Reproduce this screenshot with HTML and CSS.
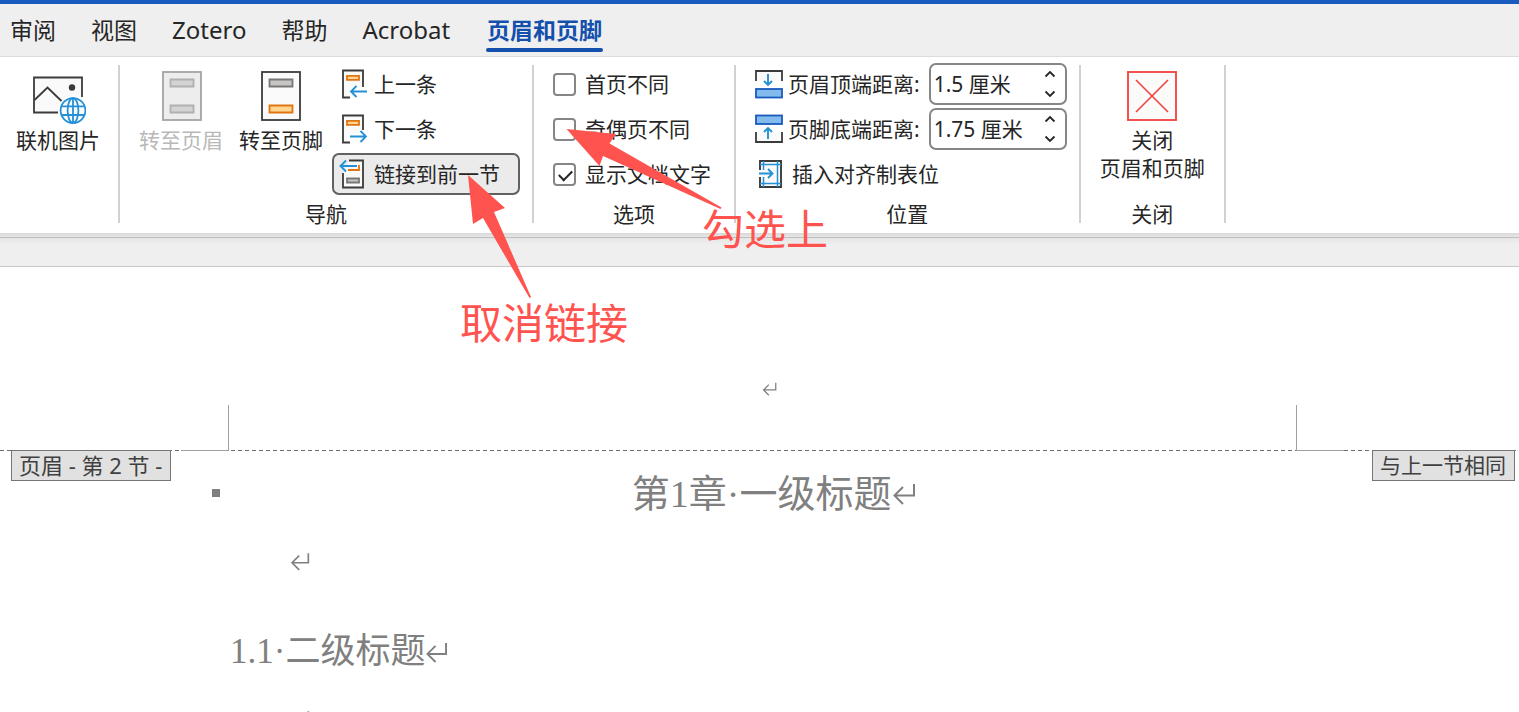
FILE: index.html
```html
<!DOCTYPE html>
<html lang="zh-CN">
<head>
<meta charset="utf-8">
<title>页眉和页脚</title>
<link rel="stylesheet" href="styles.css">
</head>
<body>
<svg class="defs" width="0" height="0" aria-hidden="true">
  <symbol id="mark" viewBox="0 0 24 22"><path d="M22 1v11.500H3M11 4L2.500 12.500L11 21" fill="none" stroke="currentColor" stroke-width="2"/></symbol>
</svg>

<nav class="tabs">
  <a href="#review">审阅</a>
  <a href="#view">视图</a>
  <a href="#zotero" class="latin">Zotero</a>
  <a href="#help">帮助</a>
  <a href="#acrobat" class="latin">Acrobat</a>
  <a href="#header-footer" class="active" aria-current="page">页眉和页脚</a>
</nav>

<div class="ribbon">
  <section class="group insert">
    <div class="tools">
      <button class="big" type="button">
        <svg width="56" height="54" viewBox="0 0 56 54" fill="none">
          <rect x="4" y="8" width="48" height="35" fill="#fafafa"/>
          <path d="M28 42.500H4V7.500H52V27" stroke="#3b3b3b" stroke-width="1.800"/>
          <path d="M4.500 30L17.500 17.500L32 31.500" stroke="#3b3b3b" stroke-width="1.800"/>
          <circle cx="42" cy="17.500" r="3.200" fill="#3b3b3b"/>
          <circle cx="43" cy="40.500" r="15" fill="#fff"/>
          <g stroke="#2490d5" stroke-width="1.800"><circle cx="43" cy="40.500" r="12.400" fill="#fafafa"/><ellipse cx="43" cy="40.500" rx="5.400" ry="12.400"/><path d="M43 28v25M32 36.300h22M32 45h22"/></g>
        </svg>
        <span>联机图片</span>
      </button>
    </div>
  </section>
  <div class="sep"></div>

  <section class="group nav">
    <div class="tools">
      <button class="big" type="button" disabled>
        <svg width="56" height="54" viewBox="0 0 56 54">
          <rect x="10" y="2" width="38" height="48" fill="#ededed" stroke="#a3a3a3" stroke-width="1.800"/>
          <path d="M17.500 9.500h23v7h-23zM17.500 35.500h23v7h-23z" fill="#d3d3d3" stroke="#b0b0b0" stroke-width="1.800"/>
        </svg>
        <span>转至页眉</span>
      </button>
      <button class="big" type="button">
        <svg width="56" height="54" viewBox="0 0 56 54">
          <rect x="9" y="2" width="38" height="48" fill="#fafafa" stroke="#3b3b3b" stroke-width="1.800"/>
          <path d="M16.500 9.500h23v7h-23z" fill="#c8c6c4" stroke="#797774" stroke-width="1.800"/>
          <path d="M16.500 35.500h23v7h-23z" fill="#ffd590" stroke="#e07410" stroke-width="1.800"/>
        </svg>
        <span>转至页脚</span>
      </button>
      <div class="rows">
        <button class="row" type="button">
          <svg width="28" height="32" viewBox="0 0 28 32" fill="none">
            <path d="M9 29.500H4V2.500H24V18H14L8 23V29.500z" fill="#fafafa"/>
            <path d="M11 29.500H4V2.500H24V19" stroke="#3b3b3b" stroke-width="1.800"/>
            <path d="M8 7.800h12v4h-12z" fill="#ffd590" stroke="#e07410" stroke-width="1.800"/>
            <path d="M28 23.500H12M17.500 18L12 23.500L17.500 29" stroke="#2490d5" stroke-width="1.900"/>
          </svg>
          <span>上一条</span>
        </button>
        <button class="row" type="button">
          <svg width="28" height="32" viewBox="0 0 28 32" fill="none">
            <path d="M9 29.500H4V2.500H24V18L20 20H9z" fill="#fafafa"/>
            <path d="M11 29.500H4V2.500H24V17" stroke="#3b3b3b" stroke-width="1.800"/>
            <path d="M8 7.800h12v4h-12z" fill="#ffd590" stroke="#e07410" stroke-width="1.800"/>
            <path d="M11 23.500H27M21.500 18L27 23.500L21.500 29" stroke="#2490d5" stroke-width="1.900"/>
          </svg>
          <span>下一条</span>
        </button>
        <button class="row pressed" type="button" aria-pressed="true">
          <svg width="28" height="32" viewBox="0 0 28 32" fill="none">
            <path d="M4 14V29.500H24V2.500H10z" fill="#fafafa"/>
            <path d="M4 15V29.500H24V2.500H10" stroke="#3b3b3b" stroke-width="1.800"/>
            <path d="M20 7v5H9" stroke="#e07410" stroke-width="1.800"/>
            <path d="M8 20.500h12v4h-12z" fill="#c8c6c4" stroke="#797774" stroke-width="1.800"/>
            <path d="M18 8H1.500M7 2.500L1.500 8L7 13.500" stroke="#2490d5" stroke-width="1.900"/>
          </svg>
          <span>链接到前一节</span>
        </button>
      </div>
    </div>
    <h2 class="caption">导航</h2>
  </section>
  <div class="sep"></div>

  <section class="group options">
    <div class="rows">
      <label class="check"><input type="checkbox"><span>首页不同</span></label>
      <label class="check"><input type="checkbox"><span>奇偶页不同</span></label>
      <label class="check"><input type="checkbox" checked><span>显示文档文字</span></label>
    </div>
    <h2 class="caption">选项</h2>
  </section>
  <div class="sep"></div>

  <section class="group position">
    <div class="rows">
      <div class="field">
        <svg width="28" height="32" viewBox="0 0 28 32" fill="none">
          <path d="M1 13V3H27V13" fill="#fafafa" stroke="#3b3b3b" stroke-width="1.800"/>
          <path d="M13 6v11M9 13L13 17L17 13" stroke="#2490d5" stroke-width="1.900"/>
          <rect x="1" y="21" width="26" height="8.500" fill="#83bbec" stroke="#185abd" stroke-width="1.800"/>
        </svg>
        <label for="top-distance">页眉顶端距离:</label>
        <div class="spin">
          <input id="top-distance" type="text" value="1.5 厘米">
          <div class="steps">
            <button type="button" aria-label="增大"><svg width="12" height="8" viewBox="0 0 12 8"><path d="M1.500 6.500L6 2L10.500 6.500"/></svg></button>
            <button type="button" aria-label="减小"><svg width="12" height="8" viewBox="0 0 12 8"><path d="M1.500 1.500L6 6L10.500 1.500"/></svg></button>
          </div>
        </div>
      </div>
      <div class="field">
        <svg width="28" height="32" viewBox="0 0 28 32" fill="none">
          <path d="M1 19V29H27V19" fill="#fafafa" stroke="#3b3b3b" stroke-width="1.800"/>
          <path d="M13 26V15M9 19L13 15L17 19" stroke="#2490d5" stroke-width="1.900"/>
          <rect x="1" y="2.500" width="26" height="8.500" fill="#83bbec" stroke="#185abd" stroke-width="1.800"/>
        </svg>
        <label for="bottom-distance">页脚底端距离:</label>
        <div class="spin">
          <input id="bottom-distance" type="text" value="1.75 厘米">
          <div class="steps">
            <button type="button" aria-label="增大"><svg width="12" height="8" viewBox="0 0 12 8"><path d="M1.500 6.500L6 2L10.500 6.500"/></svg></button>
            <button type="button" aria-label="减小"><svg width="12" height="8" viewBox="0 0 12 8"><path d="M1.500 1.500L6 6L10.500 1.500"/></svg></button>
          </div>
        </div>
      </div>
      <button class="row align-tab" type="button">
        <svg width="28" height="32" viewBox="0 0 28 32" fill="none">
          <rect x="5" y="3" width="21" height="26" fill="#fafafa"/>
          <path d="M5 12V3H26V29H5V19" stroke="#3b3b3b" stroke-width="1.900"/>
          <path d="M5 6.500H26M5 25.500H26M8.500 3V12M8.500 19V29M22.500 3V29" stroke="#2490d5" stroke-width="1.500"/>
          <path d="M4 15.500H17M13 11L17.500 15.500L13 20" stroke="#2490d5" stroke-width="1.900"/>
        </svg>
        <span>插入对齐制表位</span>
      </button>
    </div>
    <h2 class="caption">位置</h2>
  </section>
  <div class="sep"></div>

  <section class="group close">
    <div class="tools">
      <button class="big" type="button">
        <svg width="56" height="54" viewBox="0 0 56 54">
          <rect x="4" y="2" width="48" height="48" fill="#fafafa" stroke="#f2413b" stroke-width="1.800"/>
          <path d="M12 10L44 42M44 10L12 42" stroke="#f2413b" stroke-width="1.600"/>
        </svg>
        <span>关闭<br>页眉和页脚</span>
      </button>
    </div>
    <h2 class="caption">关闭</h2>
  </section>
  <div class="sep"></div>
</div>
<div class="shade"></div>

<main class="page">
  <div class="margin-top">
    <svg class="mark small" width="15" height="14"><use href="#mark"/></svg>
    <div class="corners"><i class="corner left"></i><i class="corner right"></i></div>
  </div>
  <div class="boundary"></div>
  <div class="first-line">
    <span class="tag section">页眉 - 第 2 节 -</span>
    <h1>第1章·一级标题<svg class="mark" width="24" height="22"><use href="#mark"/></svg></h1>
    <span class="tag">与上一节相同</span>
  </div>
  <div class="text">
    <p><svg class="mark" width="20" height="19"><use href="#mark"/></svg></p>
    <h2>1.1·二级标题<svg class="mark" width="23" height="21"><use href="#mark"/></svg></h2>
    <p><svg class="mark" width="20" height="19"><use href="#mark"/></svg></p>
  </div>
</main>

<div class="notes">
  <svg width="800" height="320" viewBox="0 0 800 320" fill="#ff5350">
    <path d="M468 175L505 208L494 212L531 297L529.500 298L483 218L473 224z"/>
    <path d="M566.500 129L616 134L609.500 143.500L721.500 207.500L720.500 209L603 156L599.500 166z"/>
  </svg>
  <p class="note unlink">取消链接</p>
  <p class="note tick">勾选上</p>
</div>
</body>
</html>
```
FILE: styles.css
```css
* { box-sizing: border-box; }

body {
  position: relative;
  display: flex;
  flex-direction: column;
  height: 100vh;
  margin: 0;
  overflow: hidden;
  background: #fff;
  color: #262626;
  font: 400 21px/28px "Noto Sans", "Noto Sans CJK SC", sans-serif;
}

.defs { position: absolute; }
svg { display: block; flex: none; }
h1, h2, p { margin: 0; font-weight: inherit; }

button, input { margin: 0; color: inherit; font: inherit; }
button { padding: 0; border: 0; background: none; }

/* Tab strip */
.tabs {
  display: flex;
  flex: none;
  gap: 35px;
  padding-left: 10px;
  border-top: 4px solid #185abd;
  border-bottom: 1px solid #dcdcdc;
  background: #efefef;
}
.tabs a {
  position: relative;
  color: #262626;
  font-size: 23px;
  line-height: 52px;
  text-decoration: none;
  white-space: nowrap;
}
.tabs .latin { font-size: 24px; }
.tabs .active { margin-left: 2px; color: #134fad; font-weight: 700; }
.tabs .active::after {
  position: absolute;
  right: -1px;
  bottom: 4px;
  left: -1px;
  height: 4px;
  border-radius: 2px;
  background: #134fad;
  content: "";
}

/* Ribbon */
.ribbon {
  display: flex;
  flex: none;
  padding: 6px 0 9px;
}
.group {
  display: flex;
  flex-direction: column;
  justify-content: space-between;
  gap: 9px;
}
.insert > .tools { padding: 0 18px 0 16px; }
.nav > .tools { padding: 0 12px 0 19px; }
.options > .rows { padding: 0 23px 0 19px; }
.position > .rows { padding: 0 12px 0 19px; }
.close > .tools { padding: 0 19px; }
.sep { width: 2px; margin: 2px 0 1px; background: #d1d1d1; }
.tools { display: flex; align-items: flex-start; }
.caption { font-size: 21px; line-height: 20px; text-align: center; }

.big {
  display: flex;
  flex-direction: column;
  align-items: center;
  gap: 2px;
  padding-top: 7px;
  white-space: nowrap;
}
.big + .big { margin-left: 16px; }
.big:disabled { color: #b8b8b8; }

.rows { display: flex; flex-direction: column; align-items: flex-start; gap: 3px; }
.tools .rows { margin-left: 9px; }
.row {
  display: flex;
  align-items: center;
  gap: 7px;
  height: 42px;
  padding: 0 18px 0 5px;
  border: 2px solid transparent;
  border-radius: 7px;
  white-space: nowrap;
}
.row.pressed { border-color: #616161; background: #ebebeb; }
.row.align-tab { gap: 9px; padding: 0; border: 0; }

.check { display: flex; align-items: center; gap: 9px; height: 42px; white-space: nowrap; }
.check input {
  width: 23px;
  height: 23px;
  border: 2px solid #868686;
  border-radius: 4px;
  background: #fff;
  appearance: none;
}
.check input:checked::after {
  display: block;
  width: 11px;
  height: 6px;
  margin: 5px 4px;
  border: solid #262626;
  border-width: 0 0 2px 2px;
  transform: rotate(-45deg);
  content: "";
}

.field { display: flex; align-items: center; gap: 5px; white-space: nowrap; }
.spin {
  display: flex;
  width: 138px;
  height: 42px;
  margin-left: 4px;
  border: 2px solid #868686;
  border-radius: 7px;
  background: #fff;
}
.spin input {
  flex: 1;
  min-width: 0;
  padding: 0 0 0 3px;
  border: 0;
  outline: 0;
  background: none;
}
.steps { display: flex; flex-direction: column; justify-content: space-between; padding: 5px 9px 5px 0; }
.steps path { fill: none; stroke: #262626; stroke-width: 1.8; }

.shade {
  flex: none;
  height: 34px;
  border-bottom: 1px solid #c8c8c8;
  background: linear-gradient(#d8d8d8, #e8e8e8 4px, #bebebe 4px, #bebebe 5px, #e6e6e6 5px, #efefef 12px);
}

/* Document */
.page { flex: 1; min-height: 0; color: #808080; }
.margin-top {
  display: flex;
  flex-direction: column;
  align-items: center;
  justify-content: space-between;
  height: 183px;
  padding-top: 115px;
}
.margin-top .mark { margin-left: 20px; }
.corners { display: flex; align-self: stretch; justify-content: space-between; padding: 0 175px 0 181px; }
.corner { width: 48px; height: 46px; margin-bottom: -1px; border: 0 solid #a0a0a0; }
.corner.left { border-width: 0 1px 1px 0; }
.corner.right { border-width: 0 0 1px 1px; }
.boundary { height: 1px; background: repeating-linear-gradient(90deg, #6e6e6e 0 4px, transparent 4px 7px); }

.first-line { display: flex; align-items: flex-start; padding: 0 4px 0 11px; }
.tag {
  margin-top: -1px;
  padding: 0 8px 1px 7px;
  border: 1px solid #767676;
  background: #e1e1e1;
  color: #404040;
  white-space: nowrap;
}
.tag.section { font-size: 22px; }
.page h1, .page h2 {
  display: flex;
  align-items: center;
  font-family: "Liberation Serif", "Noto Sans CJK SC", serif;
  font-weight: 400;
  white-space: nowrap;
}
.page h1 {
  position: relative;
  flex: 1;
  justify-content: center;
  padding: 21px 0 0 4px;
  font-size: 38px;
  line-height: 44px;
}
.page h1::before {
  position: absolute;
  top: 38px;
  left: 41px;
  width: 8px;
  height: 8px;
  background: #808080;
  content: "";
}
.text { padding: 36px 0 0 230px; }
.text p { padding-left: 60px; }
.page h2 { padding: 59px 0; font-size: 35px; line-height: 44px; }
.text p:last-child { margin-top: -23px; }

/* Annotations laid over the window */
.notes { position: absolute; top: 0; left: 0; pointer-events: none; }
.note {
  position: absolute;
  color: #ff5350;
  font-size: 42px;
  line-height: 48px;
  white-space: nowrap;
}
.unlink { top: 299px; left: 460px; }
.tick { top: 205px; left: 702px; }
```
